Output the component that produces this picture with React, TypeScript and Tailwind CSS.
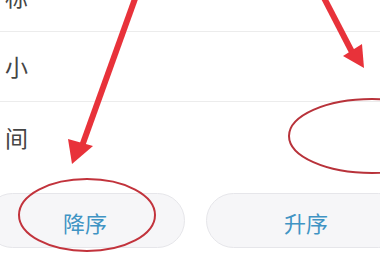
import React from "react";

const rows = ["标", "小", "间"];

const App = () => {
  return (
    <div className="relative w-[380px] h-[253px] overflow-hidden bg-white font-['Noto_Sans_CJK_SC',sans-serif]">
      {/* list rows, first one scrolled partly out of view */}
      <div className="-mt-[38px] flex flex-col">
        {rows.map((label, i) => (
          <div
            key={label}
            className={`h-[70px] flex items-center pl-[5px] text-[23px] leading-none text-[#454545] ${
              i < rows.length - 1 ? "border-b border-[#ececec]" : ""
            }`}
          >
            {label}
          </div>
        ))}
      </div>

      {/* sort buttons */}
      <div className="mt-[21px] -ml-[15px] flex gap-[21px]">
        <button className="w-[200px] h-[55px] shrink-0 rounded-full bg-[#f6f6f8] border border-[#e6e6ea] text-[22px] text-[#4094c4] flex items-center justify-center pt-[4px]">
          降序
        </button>
        <button className="w-[200px] h-[55px] shrink-0 rounded-full bg-[#f6f6f8] border border-[#e6e6ea] text-[22px] text-[#4094c4] flex items-center justify-center pt-[4px]">
          升序
        </button>
      </div>

      {/* red annotations */}
      <svg
        className="absolute inset-0 pointer-events-none"
        width="380"
        height="253"
        viewBox="0 0 380 253"
      >
        <ellipse cx="87" cy="215" rx="68" ry="36" fill="none" stroke="#c2333c" strokeWidth="2" />
        <ellipse cx="372" cy="136" rx="83" ry="37" fill="none" stroke="#b8323a" strokeWidth="2" />
        {/* left arrow */}
        <line x1="136" y1="-4" x2="82" y2="146" stroke="#e8323a" strokeWidth="6" />
        <polygon points="72,164 68,139 93,146" fill="#e8323a" />
        {/* right arrow */}
        <line x1="323" y1="-4" x2="352" y2="52" stroke="#e8323a" strokeWidth="6" />
        <polygon points="364,68 343,56 362,44" fill="#e8323a" />
      </svg>
    </div>
  );
};

export default App;
